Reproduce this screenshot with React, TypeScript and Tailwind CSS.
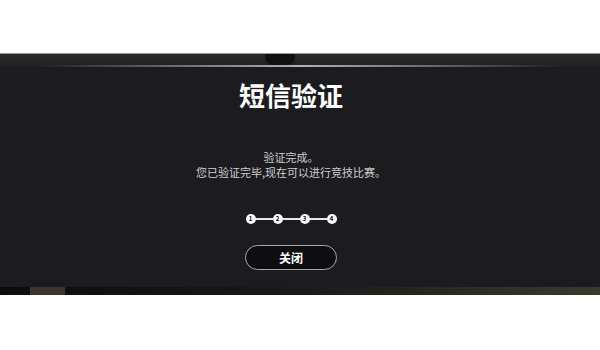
import React from "react";

export default function App() {
  const font = { fontFamily: '"Noto Sans CJK SC", "Noto Sans", sans-serif' };
  return (
    <div className="w-[600px] h-[350px] bg-white flex flex-col" style={font}>
      <div className="h-[53px] bg-white" />
      <div className="h-px bg-[#9a9a9a]" />
      <div className="relative flex flex-col bg-[#1c1b20] h-[241px]">
        {/* top strip */}
        <div className="relative h-[13px] bg-gradient-to-b from-[#2a2a2c] to-[#202023]">
          <div className="absolute left-[265px] top-0 w-[30px] h-[11px] rounded-b-[8px] bg-[#111012]" />
          <div className="absolute left-[40px] right-[40px] bottom-0 h-[2px] bg-gradient-to-r from-transparent via-[#d8d8d8] to-transparent opacity-80" />
        </div>
        <div className="flex flex-col items-center pr-[18px]">
          <div className="mt-[13px] text-[26px] leading-[30px] font-bold text-white">短信验证</div>
          <div className="mt-[40px] text-[11px] leading-[15px] text-[#cfcfcf] text-center">
            <div>验证完成。</div>
            <div>您已验证完毕,现在可以进行竞技比赛。</div>
          </div>
          <div className="mt-[34px] flex items-center">
            {[1, 2, 3, 4].map((n, i) => (
              <React.Fragment key={n}>
                {i > 0 && <div className="w-[17px] h-[2px] bg-[#e8e8e8]" />}
                <div className="w-[10px] h-[10px] rounded-full bg-white flex items-center justify-center text-[6px] leading-none font-bold text-black">
                  {n}
                </div>
              </React.Fragment>
            ))}
          </div>
          <div className="mt-[21px] w-[92px] h-[25px] rounded-full border-[1.5px] border-[#a8a8a8] bg-[#0e0d10] flex items-center justify-center text-[12px] font-bold text-white">
            关闭
          </div>
        </div>
        {/* bottom strip */}
        <div className="absolute left-0 right-0 bottom-0 h-[8px] bg-gradient-to-r from-[#0c0c0c] via-[#1a1a18] to-[#3a3a2c]">
          <div className="absolute left-[30px] w-[35px] h-full bg-[#3b362c]" />
        </div>
      </div>
      <div className="flex-1 bg-white" />
    </div>
  );
}
